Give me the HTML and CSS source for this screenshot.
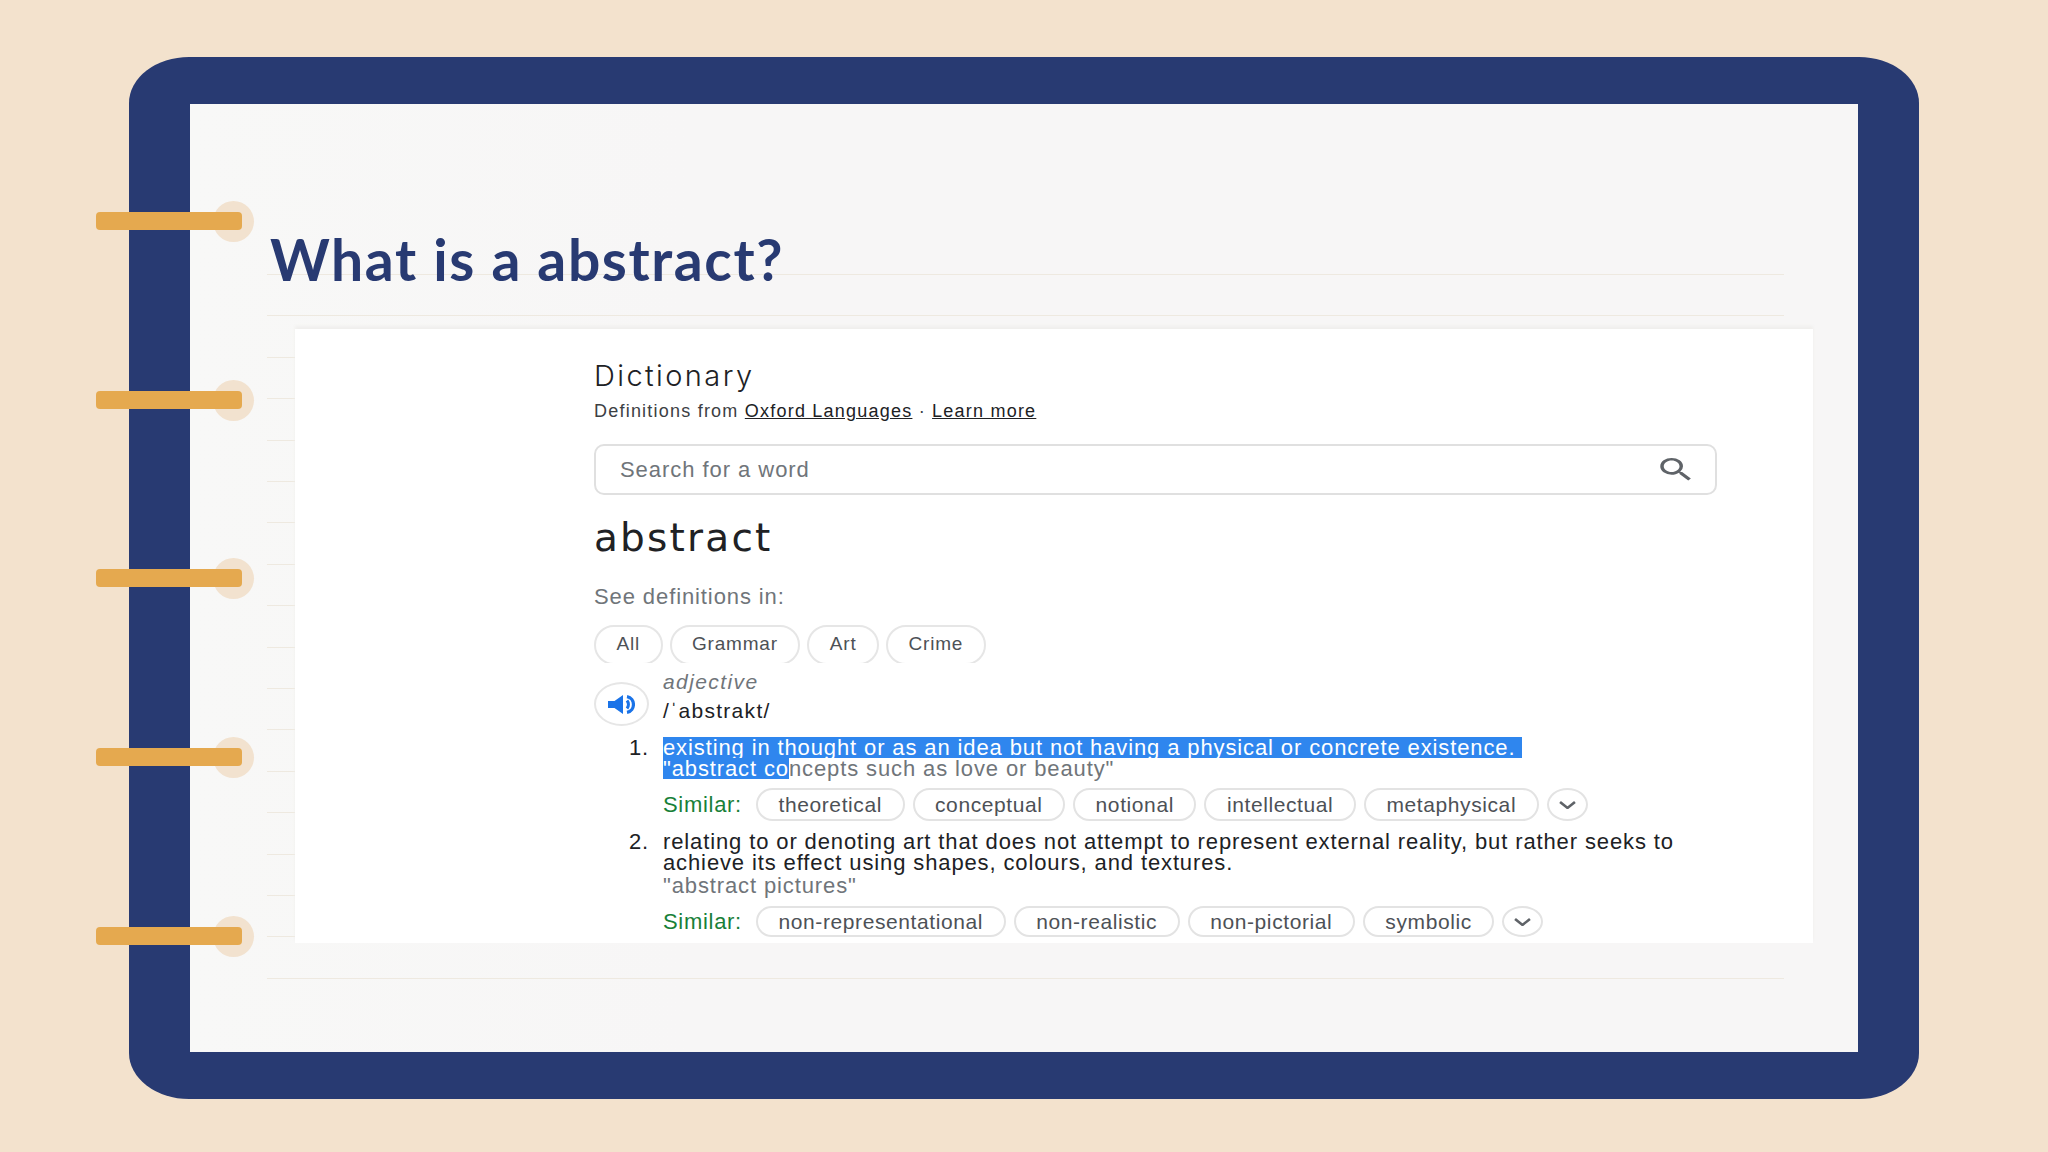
FILE: index.html
```html
<!DOCTYPE html>
<html lang="en">
<head>
<meta charset="utf-8">
<title>What is a abstract?</title>
<link rel="stylesheet" href="styles.css">
</head>
<body>
<div class="board">
  <div class="rings">
    <div class="ring"><span class="hole"></span><span class="bar"></span></div>
    <div class="ring"><span class="hole"></span><span class="bar"></span></div>
    <div class="ring"><span class="hole"></span><span class="bar"></span></div>
    <div class="ring"><span class="hole"></span><span class="bar"></span></div>
    <div class="ring"><span class="hole"></span><span class="bar"></span></div>
  </div>
  <div class="paper">
    <div class="ruled"></div>
    <h1 class="title">What is a abstract?</h1>
    <div class="card">
      <div class="dict-head">Dictionary</div>
      <div class="dict-source">Definitions from <a>Oxford Languages</a> · <a>Learn more</a></div>
      <div class="search">
        <span class="search-text">Search for a word</span>
        <svg class="search-icon" viewBox="0 0 24 24" preserveAspectRatio="none"><path d="M15.5 14h-.79l-.28-.27A6.47 6.47 0 0 0 16 9.5 6.5 6.5 0 1 0 9.5 16c1.61 0 3.09-.59 4.23-1.57l.27.28v.79l5 4.99L20.49 19l-4.99-5zm-6 0C7.01 14 5 11.99 5 9.5S7.01 5 9.5 5 14 7.01 14 9.5 11.99 14 9.5 14z"/></svg>
      </div>
      <div class="word">abstract</div>
      <div class="see">See definitions in:</div>
      <div class="tabs">
        <span class="tab">All</span>
        <span class="tab">Grammar</span>
        <span class="tab">Art</span>
        <span class="tab">Crime</span>
      </div>
      <div class="pos-row">
        <span class="speaker">
          <svg class="speaker-icon" viewBox="0 0 27 19"><path d="M0 6h6.5L15 0v19l-8.5-6H0z"/><path class="wave" d="M19 5.5c1.8 2.2 1.8 5.8 0 8"/><path class="wave" d="M19 1.6c8.6 1.6 8.6 14.2 0 15.8"/></svg>
        </span>
        <div class="pos-text">
          <div class="pos">adjective</div>
          <div class="pron">/ˈabstrakt/</div>
        </div>
      </div>
      <div class="sense first">
        <span class="num">1.</span>
        <div class="sense-body">
          <div class="line"><span class="sel sel-full">existing in thought or as an idea but not having a physical or concrete existence.</span></div>
          <div class="line example"><span class="sel">"abstract co</span>ncepts such as love or beauty"</div>
          <div class="similar">
            <span class="sim-label">Similar:</span>
            <span class="chip">theoretical</span>
            <span class="chip">conceptual</span>
            <span class="chip">notional</span>
            <span class="chip">intellectual</span>
            <span class="chip">metaphysical</span>
            <span class="chip more"><svg viewBox="0 0 16 8" preserveAspectRatio="none"><path d="M1 1l7 6 7-6"/></svg></span>
          </div>
        </div>
      </div>
      <div class="sense second">
        <span class="num">2.</span>
        <div class="sense-body">
          <div class="line">relating to or denoting art that does not attempt to represent external reality, but rather seeks to</div>
          <div class="line">achieve its effect using shapes, colours, and textures.</div>
          <div class="line example gap">"abstract pictures"</div>
          <div class="similar low">
            <span class="sim-label">Similar:</span>
            <span class="chip">non-representational</span>
            <span class="chip">non-realistic</span>
            <span class="chip">non-pictorial</span>
            <span class="chip">symbolic</span>
            <span class="chip more"><svg viewBox="0 0 16 8" preserveAspectRatio="none"><path d="M1 1l7 6 7-6"/></svg></span>
          </div>
        </div>
      </div>
    </div>
  </div>
</div>
</body>
</html>
```
FILE: styles.css
```css
* { box-sizing: border-box; }
html, body { margin: 0; padding: 0; }
body {
  width: 2048px;
  height: 1152px;
  background: #f3e2cd;
  padding: 57px 129px 0;
  overflow: hidden;
  font-family: "Liberation Sans", Arial, sans-serif;
}
.board {
  position: relative;
  width: 1790px;
  height: 1042px;
  background: #283a72;
  border-radius: 60px / 46px;
  padding: 47px 61px;
}
.paper {
  position: relative;
  height: 948px;
  background: linear-gradient(to right, #f8f8f7, #f7f6f6 30%);
  padding: 121px 0 0 80px;
}
.ruled {
  position: absolute;
  left: 77px;
  top: 170px;
  width: 1517px;
  height: 705px;
  background: repeating-linear-gradient(to bottom, #eee9e0 0, #eee9e0 1px, transparent 1px, transparent 41.4px);
}
.rings {
  position: absolute;
  left: -33px;
  top: 144px;
  display: flex;
  flex-direction: column;
  gap: 137.7px;
  z-index: 2;
}
.ring { position: relative; width: 146px; height: 41px; }
.hole {
  position: absolute;
  left: 117px;
  top: 0;
  width: 41px;
  height: 41px;
  border-radius: 50%;
  background: #f2e2cf;
}
.bar {
  position: absolute;
  left: 0;
  top: 11px;
  width: 146px;
  height: 18px;
  border-radius: 4px;
  background: #e5a94f;
}
.title {
  position: relative;
  margin: 0;
  font-family: Lato, sans-serif;
  font-weight: 700;
  font-size: 57px;
  line-height: 68px;
  letter-spacing: 1.6px;
  color: #283a72;
}
.card {
  position: relative;
  width: 1518px;
  height: 614px;
  margin: 36px 0 0 25px;
  padding: 32px 0 0 299px;
  background: #fff;
  box-shadow: 0 -3px 3px #f0efed;
  color: #202124;
}
.dict-head {
  font-family: Inter, sans-serif;
  font-weight: 300;
  font-size: 29px;
  line-height: 30px;
  letter-spacing: 2.4px;
}
.dict-source {
  margin-top: 8px;
  font-size: 18px;
  line-height: 24px;
  letter-spacing: 1.22px;
  color: #3c4043;
}
.dict-source a { text-decoration: underline; color: #202124; }
.search {
  display: flex;
  align-items: center;
  justify-content: space-between;
  width: 1123px;
  height: 51px;
  margin-top: 21px;
  padding: 0 18px 0 24px;
  border: 2px solid #e0e0e0;
  border-radius: 10px;
}
.search-text { font-size: 22px; letter-spacing: .95px; color: #70757a; }
.search-icon { width: 42px; height: 31px; fill: #5f6368; }
.word {
  margin-top: 21px;
  font-family: "DejaVu Sans", sans-serif;
  font-size: 39px;
  line-height: 44px;
  letter-spacing: 2.2px;
}
.see {
  margin-top: 24px;
  font-size: 22px;
  line-height: 26px;
  letter-spacing: .9px;
  color: #70757a;
}
.tabs {
  display: flex;
  gap: 7px;
  height: 38px;
  margin-top: 15px;
  overflow: hidden;
}
.tab {
  display: flex;
  align-items: center;
  height: 40px;
  padding: 0 20.5px 2px;
  border: 2px solid #e6e6e6;
  border-radius: 20px;
  font-size: 19px;
  letter-spacing: .8px;
  color: #4d5156;
}
.pos-row {
  display: flex;
  gap: 14px;
  height: 55px;
  margin-top: 8px;
}
.speaker {
  display: flex;
  align-items: center;
  justify-content: center;
  width: 55px;
  height: 44px;
  margin-top: 11px;
  border: 2px solid #e6e6e6;
  border-radius: 50%;
}
.speaker-icon { width: 27px; height: 19px; fill: #1a73e8; }
.speaker-icon .wave { fill: none; stroke: #1a73e8; stroke-width: 3.2; }
.pos {
  font-style: italic;
  font-size: 21px;
  line-height: 22px;
  letter-spacing: 1.4px;
  color: #70757a;
}
.pron {
  margin-top: 7px;
  font-size: 21px;
  line-height: 22px;
  letter-spacing: 1.3px;
  color: #202124;
}
.sense {
  display: flex;
  font-size: 22px;
  line-height: 21px;
  letter-spacing: .88px;
}
.sense.first { margin-top: 11px; }
.sense.second { margin-top: 10px; }
.num { width: 69px; padding-left: 35px; flex: none; }
.line { white-space: nowrap; }
.example { color: #70757a; }
.gap { margin-top: 2px; }
.sel {
  display: inline-block;
  line-height: 21px;
  background: #2f86ee;
  color: #fff;
}
.sel-full { padding-right: 7px; }
.similar {
  display: flex;
  align-items: center;
  gap: 8px;
  height: 33px;
  margin-top: 9px;
}
.similar.low { height: 31px; margin-top: 10px; }
.sim-label {
  width: 85px;
  color: #188038;
  font-size: 22px;
  letter-spacing: .7px;
}
.chip {
  display: flex;
  align-items: center;
  height: 100%;
  padding: 0 20.5px;
  border: 2px solid #e3e3e3;
  border-radius: 17px;
  font-size: 21px;
  letter-spacing: .6px;
  color: #4d5156;
}
.chip.more {
  justify-content: center;
  width: 41px;
  padding: 0;
  border-radius: 50%;
}
.chip.more svg {
  width: 17px;
  height: 8px;
  fill: none;
  stroke: #5f6368;
  stroke-width: 2.4;
}
```
